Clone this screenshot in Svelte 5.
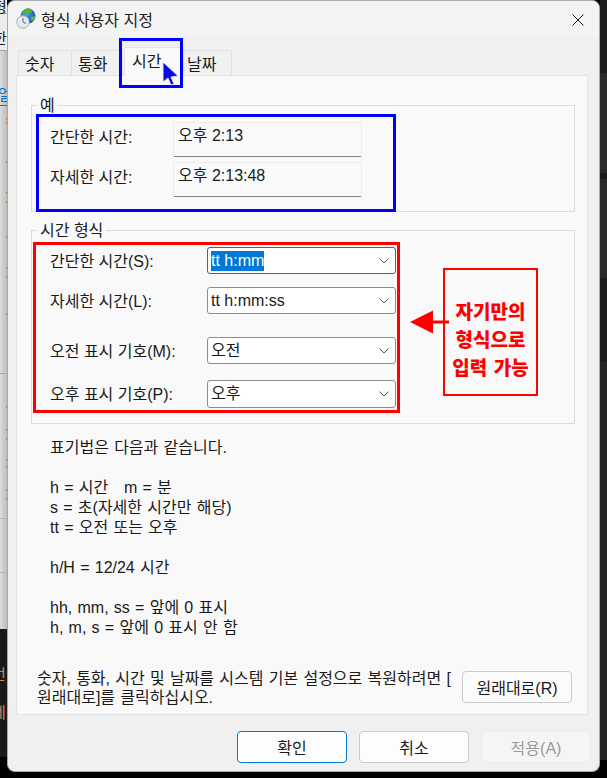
<script lang="ts">
	// Поля примера и формата времени
	const samples = [
		{ label: '간단한 시간:', value: '오후 2:13' },
		{ label: '자세한 시간:', value: '오후 2:13:48' }
	];

	const formats = [
		{ label: '간단한 시간(S):', value: 'tt h:mm', cls: 'first', focused: true },
		{ label: '자세한 시간(L):', value: 'tt h:mm:ss', cls: 'second', focused: false },
		{ label: '오전 표시 기호(M):', value: '오전', cls: 'third', focused: false },
		{ label: '오후 표시 기호(P):', value: '오후', cls: 'fourth', focused: false }
	];

	const tabs = ['숫자', '통화', '시간', '날짜'];

	const notes = [
		['표기법은 다음과 같습니다.'],
		['h = 시간 \u00a0 m = 분', 's = 초(자세한 시간만 해당)', 'tt = 오전 또는 오후'],
		['h/H = 12/24 시간'],
		['hh, mm, ss = 앞에 0 표시', 'h, m, s = 앞에 0 표시 안 함']
	];

	// Оранжевые обрезки текста за окном
	const dots = [118, 122, 161, 192, 201, 236, 267, 276, 313, 406, 429, 438, 459, 466, 489, 498];
	const bands = ['top', 'light', 'gap', 'light mid', 'dark', 'light rest'];
</script>

<div class="page">
	<div class="behind-left">
		<svg width="7" height="778" viewBox="0 0 7 778">
			<defs>
				<linearGradient id="side" x1="0" x2="1" y1="0" y2="0">
					<stop offset="0" stop-color="#dcdcdc" />
					<stop offset="1" stop-color="#bdbdbd" />
				</linearGradient>
			</defs>
			<rect width="7" height="50" fill="#ececec" />
			<rect y="50" width="7" height="579" fill="url(#side)" />
			<rect y="13" width="7" height="1" fill="#9a9a9a" />
			<rect y="50" width="7" height="1" fill="#a8a8a8" />
			<rect y="373" width="7" height="1" fill="#a8a8a8" />
			<rect y="518" width="7" height="1" fill="#b4b4b4" />
			<rect y="572" width="7" height="1" fill="#b4b4b4" />
			<rect y="629" width="7" height="128" fill="#1b1b1b" />
			<text x="-7" y="12" class="frag">형</text>
			<text x="-7" y="44" class="frag">한</text>
			<text x="-2" y="100" class="frag link">얼</text>
			<rect y="105" width="7" height="1" fill="#0078d4" />
			{#each dots as y (y)}
				<rect x="6" {y} width="1" height="1.5" fill="#b8742c" />
			{/each}
			<text x="-8" y="386" class="frag">(</text>
			<text x="-8" y="680" class="frag warm">번</text>
			<text x="-8" y="718" class="frag warm">네</text>
		</svg>
	</div>

	<div class="window">
		<header class="titlebar">
			<svg class="app-icon" width="20" height="21" viewBox="0 0 20 21">
				<defs>
					<radialGradient id="globe" cx="0.4" cy="0.35" r="0.75">
						<stop offset="0" stop-color="#4fa3f0" />
						<stop offset="1" stop-color="#123f96" />
					</radialGradient>
				</defs>
				<circle cx="12" cy="8" r="7.5" fill="url(#globe)" />
				<path d="M7 3 Q11 -1 15 1 L16 4 L12 6 L10 5 L8 7 Z" fill="#53b33a" />
				<path d="M15 9 L19 8 Q19 11 17 13 L15 12 Z" fill="#62b848" />
				<circle cx="7" cy="14" r="6.2" fill="#e6ebee" stroke="#a3adb3" />
				<path d="M7 10 V14 L10 15.5" fill="none" stroke="#5b6670" stroke-width="1" />
			</svg>
			<span class="title">형식 사용자 지정</span>
			<svg class="close" width="12" height="12" viewBox="0 0 12 12">
				<path d="M0.5 0.5 L11.5 11.5 M11.5 0.5 L0.5 11.5" stroke="#1a1a1a" stroke-width="1" />
			</svg>
		</header>

		<nav class="tabs">
			{#each tabs as tab, i (tab)}
				<div class="tab" class:active={i === 2}>{tab}</div>
			{/each}
		</nav>

		<section class="panel">
			<fieldset class="group sample-group">
				<legend>예</legend>
				{#each samples as row (row.label)}
					<div class="sample-row">
						<span class="label">{row.label}</span>
						<div class="readout">{row.value}</div>
					</div>
				{/each}
			</fieldset>

			<fieldset class="group format-group">
				<legend>시간 형식</legend>
				{#each formats as row (row.label)}
					<div class="format-row {row.cls}">
						<span class="label">{row.label}</span>
						<div class="combo" class:focused={row.focused}>
							<span class="combo-value" class:selected={row.focused}>{row.value}</span>
							<svg class="chevron" width="10" height="6" viewBox="0 0 10 6">
								<path d="M0.5 0.5 L5 5 L9.5 0.5" fill="none" stroke="#555" stroke-width="1" />
							</svg>
						</div>
					</div>
				{/each}
			</fieldset>

			<div class="notes">
				{#each notes as group, i (i)}
					<p>
						{#each group as line (line)}
							<span>{line}</span>
						{/each}
					</p>
				{/each}
			</div>

			<div class="restore">
				<p>숫자, 통화, 시간 및 날짜를 시스템 기본 설정으로 복원하려면 [<br />원래대로]를 클릭하십시오.</p>
				<button class="btn restore-btn">원래대로(R)</button>
			</div>
		</section>

		<footer class="actions">
			<button class="btn primary">확인</button>
			<button class="btn">취소</button>
			<button class="btn disabled">적용(A)</button>
		</footer>
	</div>

	<div class="behind-right">
		{#each bands as band, i (i)}
			<div class="band {band}"></div>
		{/each}
	</div>

	<!-- Пометки поверх скриншота -->
	<div class="mark blue tab-mark"></div>
	<div class="mark blue sample-mark"></div>
	<div class="mark red format-mark"></div>

	<svg class="pointer" width="18" height="26" viewBox="0 0 18 26">
		<path d="M1 1 V21 L6 17 L9 24 L12 23 L9 16 L16 15 Z" fill="#0a0ae0" stroke="#dfe3ee" stroke-width="1" />
	</svg>

	<svg class="arrow" width="40" height="26" viewBox="0 0 40 26">
		<path d="M0 13 L23 1.5 V11.5 H39 V14.5 H23 V24.5 Z" fill="#ff0000" />
	</svg>

	<div class="callout">자기만의<br />형식으로<br />입력 가능</div>
</div>

<style>
	:global(body) {
		margin: 0;
		background: #000;
	}

	.page {
		position: relative;
		display: flex;
		align-items: flex-start;
		width: 607px;
		height: 778px;
		overflow: hidden;
		background: #000;
		font-family: 'Liberation Sans', 'Noto Sans CJK KR', sans-serif;
		font-size: 16px;
		color: #1a1a1a;
	}

	/* --- ФОН ЗА ОКНОМ --- */
	.behind-left {
		width: 7px;
		height: 757px;
		overflow: hidden;
		flex: none;
	}

	.behind-left svg {
		display: block;
	}

	.frag {
		font-size: 15px;
		fill: #222;
	}

	.frag.link {
		fill: #0a6cc4;
	}

	.frag.warm {
		fill: #c98a68;
	}

	.behind-right {
		width: 7px;
		height: 760px;
		flex: none;
		display: flex;
		flex-direction: column;
	}

	.band {
		background: #2a2a2a;
	}

	.band.top {
		height: 73px;
		background: #1c1c1c;
	}

	.band.light {
		height: 100px;
	}

	.band.gap {
		height: 6px;
		background: #1c1c1c;
	}

	.band.mid {
		height: 99px;
	}

	.band.dark {
		height: 84px;
		background: #1c1c1c;
	}

	.band.rest {
		height: 398px;
		background: #242424;
	}

	/* --- ОКНО --- */
	.window {
		box-sizing: border-box;
		width: 593px;
		height: 772px;
		flex: none;
		display: flex;
		flex-direction: column;
		background: #f0f0f0;
		border: 1px solid #a9a9a9;
		border-top-color: #b0b0b0;
		border-radius: 8px;
		overflow: hidden;
	}

	.titlebar {
		box-sizing: border-box;
		height: 37px;
		flex: none;
		display: flex;
		align-items: center;
		padding: 0 15px 2px 8px;
		background: #f3f3f3;
	}

	.app-icon {
		margin-right: 5px;
		flex: none;
	}

	.title {
		color: #222;
	}

	.close {
		margin-left: auto;
		margin-top: 2px;
	}

	.tabs {
		height: 37px;
		flex: none;
		display: flex;
		align-items: flex-end;
		padding-left: 10px;
		position: relative;
		z-index: 1;
	}

	.tab {
		box-sizing: border-box;
		width: 54px;
		height: 25px;
		display: flex;
		align-items: center;
		padding-left: 6px;
		border: 1px solid #e3e3e3;
		border-bottom: none;
		margin-right: -1px;
	}

	.tab:nth-child(2) {
		width: 52px;
		padding-left: 6px;
	}

	.tab:nth-child(4) {
		width: 49px;
		padding-left: 3px;
	}

	.tab.active {
		width: 58px;
		height: 29px;
		margin: 0 1px 0 2px;
		padding: 0 0 4px 7px;
		position: relative;
		top: 1px;
		background: #f9f9f9;
	}

	.panel {
		box-sizing: border-box;
		height: 640px;
		margin: 0 11px 0 8px;
		padding: 19px 12px 11px 14px;
		flex: none;
		display: flex;
		flex-direction: column;
		background: #f9f9f9;
		border: 1px solid #e4e4e4;
	}

	/* --- ГРУППЫ --- */
	.group {
		margin: 0;
		padding: 0;
		min-width: 0;
		border: 1px solid #dcdcdc;
	}

	legend {
		margin-left: -13px;
		padding: 0 3px;
		height: 20px;
		line-height: 22px;
	}

	.sample-group {
		padding: 7px 0 14px 18px;
		height: 117px;
		box-sizing: border-box;
	}

	.format-group {
		margin-top: 8px;
		padding: 7px 0 15px 18px;
		height: 204px;
		box-sizing: border-box;
	}

	.sample-row {
		display: flex;
		align-items: flex-start;
		height: 35px;
	}

	.sample-row + .sample-row {
		margin-top: 5px;
	}

	.label {
		width: 123px;
		flex: none;
		line-height: 20px;
	}

	.sample-row .label {
		padding-top: 6px;
	}

	.readout {
		box-sizing: border-box;
		width: 189px;
		height: 35px;
		padding: 3px 4px;
		line-height: 20px;
		border: 1px solid #ececec;
		border-bottom-color: #858585;
		border-radius: 2px;
	}

	.format-row {
		display: flex;
		align-items: center;
		height: 27px;
	}

	.format-row .label {
		width: 157px;
		padding-top: 2px;
	}

	.format-row.second {
		margin-top: 13px;
	}

	.format-row.third {
		margin-top: 23px;
	}

	.format-row.fourth {
		margin-top: 16px;
		height: 28px;
	}

	.combo {
		box-sizing: border-box;
		width: 189px;
		height: 100%;
		display: flex;
		align-items: center;
		padding: 0 6px 0 3px;
		background: #fff;
		border: 1px solid #8c8c8c;
		border-radius: 3px;
	}

	.combo.focused {
		border-color: #0078d4;
	}

	.combo-value {
		line-height: 20px;
	}

	.combo-value.selected {
		background: #0078d7;
		color: #fff;
	}

	.chevron {
		margin-left: auto;
	}

	/* --- ТЕКСТ СПРАВКИ --- */
	.notes {
		margin-top: 14px;
		padding-left: 19px;
		line-height: 20px;
		word-spacing: 0.8px;
	}

	.notes p {
		margin: 0 0 20px;
	}

	.notes span {
		display: block;
	}

	.restore {
		margin-top: auto;
		height: 32px;
		display: flex;
		align-items: center;
		padding-right: 2px;
		margin-left: 6px;
	}

	.restore p {
		margin: 0;
		line-height: 19px;
		width: 425px;
		flex: none;
		white-space: nowrap;
		word-spacing: 0.8px;
		position: relative;
		top: 1px;
	}

	.btn {
		box-sizing: border-box;
		width: 110px;
		height: 32px;
		padding: 0;
		font: inherit;
		color: #1a1a1a;
		background: #fdfdfd;
		border: 1px solid #cbcbcb;
		border-radius: 4px;
	}

	.restore-btn {
		background: #fbfbfb;
	}

	.actions {
		flex: none;
		display: flex;
		justify-content: flex-end;
		gap: 12px;
		padding: 16px 8px 0 0;
	}

	.btn.primary {
		border: 1.5px solid #0078d4;
	}

	.btn.disabled {
		background: #f5f5f5;
		border-color: #ebebeb;
		color: #9a9a9a;
	}

	/* --- ПОМЕТКИ --- */
	.mark {
		position: absolute;
		z-index: 2;
		box-sizing: border-box;
		border-style: solid;
		border-width: 3px;
	}

	.blue {
		border-color: #0000ff;
	}

	.red {
		border-color: #ff0000;
	}

	.tab-mark {
		left: 119px;
		top: 38px;
		width: 64px;
		height: 50px;
	}

	.sample-mark {
		left: 36px;
		top: 114px;
		width: 360px;
		height: 98px;
	}

	.format-mark {
		left: 33px;
		top: 242px;
		width: 367px;
		height: 171px;
	}

	.pointer {
		position: absolute;
		z-index: 3;
		left: 162px;
		top: 61px;
	}

	.arrow {
		position: absolute;
		z-index: 2;
		left: 410px;
		top: 309px;
	}

	.callout {
		position: absolute;
		z-index: 2;
		box-sizing: border-box;
		left: 443px;
		top: 268px;
		width: 95px;
		height: 128px;
		display: flex;
		align-items: center;
		justify-content: center;
		text-align: center;
		padding-top: 13px;
		border: 2px solid #ff0000;
		font-family: 'Noto Sans CJK KR', sans-serif;
		font-size: 19px;
		font-weight: 900;
		line-height: 28px;
		word-spacing: 2px;
		color: #ff0000;
	}
</style>
